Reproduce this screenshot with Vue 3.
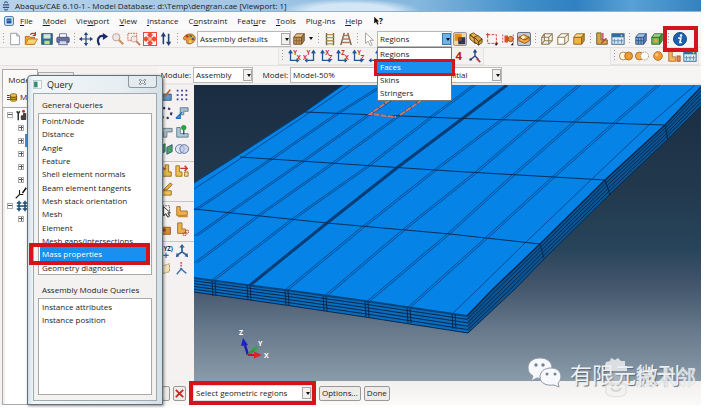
<script setup>
import { ref } from 'vue'

const menus = [
  ['', 'F', 'ile'], ['', 'M', 'odel'], ['Vie', 'w', 'port'], ['', 'V', 'iew'], ['', 'I', 'nstance'],
  ['C', 'o', 'nstraint'], ['Feat', 'u', 're'], ['', 'T', 'ools'], ['Plu', 'g', '-ins'], ['', 'H', 'elp']
]

const axis = (a, b, flip) => {
  const x = flip ? 12 : 4
  const e = flip ? 3 : 13
  const s = flip ? 1 : -1
  return `<path d="M${x} 3V13H${e}M${x - 2} 5L${x} 2L${x + 2} 5M${e + s * 2} 11L${e} 13L${e + s * 2} 15" fill="none" stroke="#1f5693" stroke-width="1.5"/>` +
    `<text x="${flip ? 4 : 7}" y="7" font-size="7" font-weight="bold" fill="#d32a2a" font-family="Open Sans">${a}</text>` +
    `<text x="${flip ? 0 : 11}" y="12" font-size="7" font-weight="bold" fill="#d32a2a" font-family="Open Sans">${b}</text>`
}
const digit = n => `<text x="4" y="13" font-size="13" font-weight="bold" fill="#cc1414" font-family="Open Sans">${n}</text>`
const box = (front, top, side, line) =>
  `<path d="M2 6H11V14H2Z" fill="${front}" stroke="${line}"/><path d="M2 6L5 2H14L11 6Z" fill="${top}" stroke="${line}"/><path d="M11 6L14 2V10L11 14Z" fill="${side}" stroke="${line}"/>`

const icons = {
  app: '<path d="M3 6H13M3 10H13" stroke="#38507e" stroke-width="2"/><path d="M5 3L8 1L11 3M5 13L8 15L11 13" fill="none" stroke="#5671a0" stroke-width="2"/>',
  win: '<rect x="1" y="1" width="14" height="14" rx="2" fill="#e8f0fa" stroke="#3c6fb5" stroke-width="1.6"/><rect x="4" y="4" width="8" height="8" fill="#2556a0"/><path d="M5 7H11" stroke="#9cc1ea"/>',
  file: '<path d="M3 1.5H10L13 4.5V14.5H3Z" fill="#fff" stroke="#8d93a0"/><path d="M10 1.5V4.5H13" fill="none" stroke="#8d93a0"/>',
  open: '<path d="M1.5 14V5H6L7 6H12V14Z" fill="#e8a333" stroke="#a8690f"/><path d="M1.5 14L5 8H15.5L12 14Z" fill="#fbd477" stroke="#b87a1e"/><path d="M7 3C9 1 11 1 13 3M13 0V4H10" fill="none" stroke="#c93220" stroke-width="1.3"/>',
  save: '<rect x="2" y="2" width="12" height="12" fill="#2f6e91" stroke="#20496b"/><rect x="4" y="2.5" width="8" height="5" fill="#d5e8d8"/><rect x="5" y="10" width="6" height="4" fill="#bfe07d"/>',
  print: '<path d="M4 6V2H12V6" fill="#fff" stroke="#656c8c"/><rect x="1" y="6" width="14" height="6" rx="1" fill="#67709b" stroke="#454d74"/><path d="M4 10H12L13 14.500H3Z" fill="#cfd8ee" stroke="#59628a"/>',
  move: '<path d="M8 1V15M1 8H15" stroke="#23457b" stroke-width="1.4"/><path d="M8 0L10.500 3.500H5.500ZM8 16L10.500 12.500H5.500ZM0 8L3.500 5.500V10.500ZM16 8L12.500 5.500V10.500Z" fill="#23457b"/>',
  rotate: '<path d="M5 15C1 8 5 3 11 5" fill="none" stroke="#182c6e" stroke-width="2.500"/><path d="M9 1L15 5L9 9Z" fill="#182c6e"/>',
  mag: '<circle cx="6" cy="6" r="4" fill="#efe7e4" stroke="#c4aaa4" stroke-width="1.300"/><path d="M9 9L14 14" stroke="#d1925c" stroke-width="2.500"/>',
  magbox: '<rect x="1" y="1.500" width="10" height="8" fill="none" stroke="#d84b3c" stroke-dasharray="2 1"/><circle cx="8" cy="8" r="3.500" fill="#f3e9e7" stroke="#bda29c"/><path d="M10.500 10.500L15 15" stroke="#c0785a" stroke-width="2"/>',
  fit: '<rect x="0" y="0" width="16" height="16" fill="#ef4a35"/><path d="M2 2L6 6M14 2L10 6M2 14L6 10M14 14L10 10M2 6V2H6M10 2H14V6M2 10V14H6M10 14H14V10" fill="none" stroke="#fff" stroke-width="1.600"/><rect x="6" y="6" width="4" height="4" fill="#f7b2a8"/>',
  cycle: '<path d="M5 14V3M11 2V13" stroke="#233f75" stroke-width="1.800"/><path d="M5 0L8 5H2ZM11 16L14 11H8Z" fill="#233f75"/>',
  palette: '<path d="M2 6C5 1 13 1 15 6C16 11 10 15 6 13C4 12 7 10 4 9C2 9 1 8 2 6Z" fill="#e99a3c" stroke="#9a5a1e"/><circle cx="6" cy="5" r="1.700" fill="#d1331e"/><circle cx="10" cy="4.500" r="1.500" fill="#2f8f3c"/><circle cx="12.500" cy="8" r="1.500" fill="#2c5fb5"/><circle cx="9.500" cy="11" r="1.500" fill="#f7e05b"/>',
  cube: box('#c9985a', '#e4c08a', '#a9783d', '#6d4b24') + '<path d="M5 6V14M2 10H11M8 6V14" stroke="#8a6230"/>',
  ladder: '<path d="M4 1V15M12 1V15" stroke="#6c6648" stroke-width="1.600"/><path d="M4 3H12M4 6.500H12M4 10H12M4 13.500H12" stroke="#b09a4d" stroke-width="1.500"/>',
  ladder2: '<path d="M6 1L2 15M10 1L14 15" stroke="#7b604a" stroke-width="1.600"/><path d="M5 4H11M4 8H12M3 12H13" stroke="#b57a52" stroke-width="1.500"/>',
  cursor: '<path d="M4 1V13L7 10.500L9.500 15.500L11.500 14.500L9 9.500H13Z" fill="#fff" stroke="#9b9b9b"/>',
  shade: '<rect x="0.500" y="0.500" width="15" height="15" rx="2" fill="#f4d6a6" stroke="#7b8295"/><rect x="2" y="2" width="8" height="8" fill="#e88c1d"/><rect x="6" y="6" width="8" height="8" fill="#273763"/><rect x="6" y="6" width="4" height="4" fill="#8d4f2a"/>',
  cubes: '<path d="M1 3L5 1L11 5L7 8ZM1 3V8L7 13V8ZM7 8L11 5V10L7 13Z" fill="#e9b34d" stroke="#5d4115"/><path d="M6 6L10 4L15 8L11 11ZM6 6V11L11 15V11ZM11 11L15 8V12L11 15Z" fill="#dca03b" stroke="#5d4115"/>',
  rect: '<rect x="3" y="3" width="10" height="10" fill="none" stroke="#d33429" stroke-dasharray="3 1.500"/><path d="M1 3H5M3 1V5M11 13H15M13 11V15" stroke="#d33429"/><path d="M14 15V12L11 15Z" fill="#111"/>',
  nodes: '<path d="M2 3V13M14 3V13" stroke="#b23b2c" stroke-dasharray="2 1.500"/><rect x="4" y="4" width="4" height="8" fill="#e4482f"/><circle cx="11" cy="8" r="3" fill="#e88f2e" stroke="#a83b1b"/><path d="M14 15V12L11 15Z" fill="#111"/>',
  tray: '<rect x="0.500" y="0.500" width="15" height="15" rx="2" fill="#c5c9d2" stroke="#4f5c7a"/><path d="M2 6L8 3L14 6L9 9ZM2 6V10L9 13L14 10V6L9 9Z" fill="#f1a845" stroke="#8a5616"/><circle cx="7" cy="6" r="2" fill="#fff2d8"/>',
  wire: '<path d="M2 6H10V14H2ZM5 2H14V10H5ZM2 6L5 2M10 6L14 2M10 14L14 10M2 14L5 10" fill="none" stroke="#8b7b52" stroke-width="1.200"/>',
  hidden: '<path d="M2 6H10V14H2ZM2 6L6 2H14L10 6M14 2V10L10 14" fill="#fdfcf6" stroke="#8f8158" stroke-width="1.200"/>',
  solid: box('#f1b53c', '#fbd784', '#c98a1d', '#8d611a'),
  align: '<path d="M2 1H7V9H14V14H2Z" fill="#d5a845" stroke="#5c5226"/><path d="M9 1V9M7 13L13 7" stroke="#c72a50" stroke-width="1.400"/>',
  table: '<rect x="1" y="2" width="14" height="12" fill="#dce9f2" stroke="#2e5f86"/><rect x="1" y="2" width="14" height="4" fill="#2f6f9c"/><path d="M4 8V13M8 8V13M12 8V13M2 10H14" stroke="#5d8aa8"/><circle cx="12" cy="4" r="1" fill="#f1cf51"/>',
  mesh: box('#7ea6da', '#a9c6ea', '#5b82b9', '#31517f') + '<path d="M5 6V14M8 6V14M2 10H11" stroke="#31517f"/>',
  green: box('#74b45c', '#a1d186', '#4f8e3c', '#2f6b27') + '<rect x="4.500" y="8" width="4" height="4" fill="#e9a236"/>',
  info: '<circle cx="8" cy="8" r="7.500" fill="#1a61b2" stroke="#124682"/><circle cx="9.200" cy="4" r="1.400" fill="#fff"/><path d="M6 7H9L7.800 12H10" fill="none" stroke="#fff" stroke-width="1.800"/>',
  csys: '<path d="M8 8V2M8 8L3 12M8 8L12 12" stroke="#23457b" stroke-width="1.600"/><path d="M8 0L10.500 4H5.500Z" fill="#23457b"/><circle cx="3" cy="12" r="1.500" fill="#23457b"/><path d="M10 11L14 15" stroke="#c7303f" stroke-width="2"/>',
  union: '<circle cx="5" cy="8" r="4.500" fill="#fff6e4" stroke="#a8803e"/><circle cx="11" cy="8" r="4.500" fill="#f29a2e" stroke="#a8661a"/>',
  cut: '<circle cx="5" cy="8" r="4.500" fill="#f4ab4a" stroke="#a8661a"/><circle cx="11" cy="8" r="4.500" fill="#fffdf7" stroke="#9a927b" stroke-dasharray="2 1"/>',
  ball: '<circle cx="8" cy="8" r="5" fill="#f09a30" stroke="#b46d1d"/><circle cx="6.500" cy="6.500" r="2" fill="#f9c377"/>',
  parts: '<path d="M2 1H6V9H10V14H2Z" fill="#f1b660" stroke="#b06f26"/><rect x="11.500" y="8" width="3.500" height="6" fill="#e98a4f" stroke="#a84f24"/>',
  instance: '<path d="M2 7H14V14H2Z" fill="#6494c5" stroke="#2f5481"/><path d="M6 10L13 2" stroke="#b5632b" stroke-width="2"/>',
  dots: '<g fill="#333c9c"><rect x="2" y="2" width="2" height="2"/><rect x="7" y="2" width="2" height="2"/><rect x="12" y="2" width="2" height="2"/><rect x="2" y="7" width="2" height="2"/><rect x="7" y="7" width="2" height="2"/><rect x="12" y="7" width="2" height="2"/><rect x="2" y="12" width="2" height="2"/><rect x="7" y="12" width="2" height="2"/><rect x="12" y="12" width="2" height="2"/></g>',
  ring: '<circle cx="8" cy="8" r="6" fill="none" stroke="#30335f" stroke-width="2.500" stroke-dasharray="2.500 3.500"/>',
  step: '<path d="M6 2H15V6H10V10H6Z" fill="#a9c1cc" stroke="#55788a"/><path d="M1 14L8 7M1 14H6V10" fill="#79a5df" stroke="#1f6fc4" stroke-width="1.500"/>',
  stepg: '<path d="M1 5H15V9H9V15H5V9H1Z" fill="#b3c2ca" stroke="#5e7786"/>',
  pin: '<path d="M2 4H6V11H15V15H2Z" fill="#b4cad3" stroke="#55788a"/><path d="M10 5V12" stroke="#1d4e86" stroke-width="1.500"/><circle cx="10" cy="4" r="3" fill="#2f9e45"/>',
  sheet: '<path d="M1 5L7 2V11L1 14Z" fill="#4ba35a" stroke="#2c6f39"/><path d="M9 6L15 3V11L9 14Z" fill="#4ba35a" stroke="#30568b"/>',
  rings: '<circle cx="5.500" cy="8" r="5" fill="#dfe6f4" stroke="#5b6c9b"/><circle cx="10.500" cy="8" r="5" fill="#b8c6e4" fill-opacity=".6" stroke="#5b6c9b"/>',
  bracket: '<path d="M3 6H7V1H11V9H14V14H3Z" fill="#e9b54a" stroke="#8f6520"/><path d="M2 3L8 6" stroke="#c44427" stroke-width="1.500"/>',
  shift: '<path d="M1 2H5V9H8V14H1Z" fill="#f1c04e" stroke="#96701f"/><path d="M11 9H15V14H11Z" fill="#f6dc96" stroke="#96701f"/><path d="M6 5H14M11 2L14 5L11 8" fill="none" stroke="#cf2f24" stroke-width="1.500"/>',
  tilt: '<path d="M2 10H14V15H2Z" fill="#f1c04e" stroke="#96701f"/><path d="M5 9L13 1L15 3L9 9Z" fill="#f0b33b" stroke="#7b551a"/>',
  pick: '<rect x="1" y="2" width="11" height="11" fill="none" stroke="#555" stroke-dasharray="2 1"/><path d="M5 3V13L8 11L10 15L12 14L10 10H13Z" fill="#fff" stroke="#222"/>',
  slab: '<path d="M2 3H6V8H14V13H2Z" fill="#eeb04a" stroke="#a16b24"/><path d="M2 13L4 15H15L14 13" fill="#c98b34"/>',
  slabcut: '<path d="M3 1H8V8H12V13H3Z" fill="#e8b14b" stroke="#a16b24"/><circle cx="11" cy="14" r="1.800" fill="none" stroke="#c0473a"/><circle cx="14" cy="11" r="1.800" fill="none" stroke="#c0473a"/>',
  block: '<path d="M1 6H13V14H1Z" fill="#d98c38" stroke="#8b551b"/><circle cx="6" cy="9" r="2" fill="#8d4f23"/>',
  xyz: '<text x="5" y="8" font-size="7" font-weight="bold" fill="#23355f" font-family="Open Sans">YZ)</text><path d="M8 10V16M5 13H11" stroke="#2c62a8" stroke-width="1.300"/>',
  triad: '<path d="M8 9V2M8 9L2 13M8 9L14 13" stroke="#2b5f97" stroke-width="2"/><path d="M8 0L11 4H5ZM1 15L2 10L5 14ZM15 15L14 10L11 14Z" fill="#2b5f97"/>',
  plane: '<path d="M2 5L12 2V11L2 14Z" fill="#efe1bd" stroke="#a38f58" stroke-dasharray="3 1"/>',
  triad2: '<path d="M7 0V5" stroke="#c7303f" stroke-width="1.500" stroke-dasharray="2 1"/><path d="M7 8L2 14M7 8L13 13" stroke="#3d73b2" stroke-width="1.500"/><circle cx="7" cy="8" r="1.500" fill="#3d73b2"/>',
  db: '<path d="M5 4C5 2 14 2 14 4V12C14 14 5 14 5 12Z" fill="#eec23f" stroke="#5b430d"/><path d="M5 6C5 8 14 8 14 6M5 9C5 11 14 11 14 9M0 5H4M0 8H4M0 11H4" fill="none" stroke="#5b430d" stroke-width="1.500"/>',
  model: '<path d="M3 15V6L1 3M3 6L5 3" fill="none" stroke="#333" stroke-width="2"/><path d="M7 14V9H10V6H13V14Z" fill="#444" stroke="#222"/><circle cx="10" cy="3" r="2" fill="#bb3526"/>',
  annot: '<path d="M1 15L7 9M6 4V10H11" fill="none" stroke="#222" stroke-width="1.500"/><path d="M10 8L15 1" stroke="#111" stroke-width="2"/>',
  jobs: '<path d="M4 1V15M12 1V15M1 4H7M9 4H15M1 8H15M1 12H7M9 12H15" stroke="#1f4a68" stroke-width="2"/>',
  query: '<rect x="1" y="1" width="14" height="14" fill="#f3f7f6" stroke="#9bb0b5"/><rect x="2" y="3" width="6" height="10" fill="#2a8c73"/>'
}

const mainA = ['file', 'open', 'save', 'print', '|', 'move', 'rotate', 'mag', 'magbox', 'fit', 'cycle', '|', 'palette']
const mainC = ['shade', 'cubes', 'rect', 'nodes', 'tray', '|', 'wire', 'hidden', 'solid', '|', 'align', 'table', '|', 'mesh', 'green', '|']
const views = [axis('Y', 'X'), axis('Y', 'X', true), axis('X', 'Z'), axis('Z', 'X'), axis('Y', 'Z'), axis('', '', true)]
const saved = ['', '', '', digit(4), icons.csys]
const booleans = ['union', 'cut', 'ball', 'parts', 'table']
const toolbox = [
  ['instance', 'dots', 'ring', 'step', 'stepg', 'pin', 'sheet', 'rings'],
  ['bracket', 'shift', 'tilt'],
  ['pick', 'slab', 'block', 'slabcut'],
  ['xyz', 'triad', 'plane', 'triad2']
]
const picks = ['Regions', 'Faces', 'Skins', 'Stringers']
const general = ['Point/Node', 'Distance', 'Angle', 'Feature', 'Shell element normals', 'Beam element tangents',
  'Mesh stack orientation', 'Mesh', 'Element', 'Mesh gaps/intersections', 'Mass properties', 'Geometry diagnostics']
const assembly = ['Instance attributes', 'Instance position']
const chosen = ref('Mass properties')
const pick = ref('Faces')

const tree = [
  { d: 0, i: 'model' }, { d: 1 }, { d: 1, sel: true }, { d: 1 }, { d: 1 }, { d: 1 },
  { d: 1, i: 'annot', leaf: true }, { d: 0, i: 'jobs' }, { d: 1 }
]

// Plate geometry: each rib runs from the far edge to the front edge of the top face.
const ribs = [
  [[377, 88], [337, 113], [270, 159], [194, 210]],
  [[412, 85], [367, 115], [302, 161], [227, 213], [194, 236]],
  [[442, 85], [397, 116], [332, 163], [258, 215], [194, 263]],
  [[473, 85], [430, 117], [367, 166], [293, 218], [212, 280]],
  [[543, 85], [500, 120], [435, 169], [363, 226], [285, 290]],
  [[578, 85], [535, 121], [475, 172], [402, 230], [323, 297]],
  [[617, 85], [573, 122], [512, 175], [447, 234], [365, 303]],
  [[657, 85], [613, 123], [552, 177], [485, 238], [407, 308]]
]
const pts = (list, dx = 0) => list.map(([x, y]) => `${x + dx},${y}`).join(' ')
const topEdge = [[194, 278], [285, 290], [365, 301], [467, 316]]
const lowEdge = [[194, 292], [285, 305], [365, 317], [468, 333]]
const sideTop = [[467, 316], [492, 290], [540, 244], [605, 180], [665, 125], [701, 87]]
const sideLow = [[468, 333], [515, 289], [545, 258], [610, 194], [668, 139], [701, 106]]
const mix = (a, b, t) => a.map(([x, y], i) => [x + (b[i][0] - x) * t, y + (b[i][1] - y) * t])
const layers = [0.2, 0.4, 0.6, 0.8]
const joints = [[212, 281], [247, 285], [285, 290], [323, 296], [365, 302], [407, 308], [452, 314]]
</script>

<template>
  <div class="app">
    <header class="title">
      <svg class="glyph" viewBox="0 0 16 16" v-html="icons.app" />
      <span>Abaqus/CAE 6.10-1 - Model Database: d:\Temp\dengran.cae [Viewport: 1]</span>
    </header>

    <nav class="menu">
      <svg class="glyph" viewBox="0 0 16 16" v-html="icons.win" />
      <button v-for="m in menus" :key="m.join('')" type="button">{{ m[0] }}<u>{{ m[1] }}</u>{{ m[2] }}</button>
      <svg class="help" viewBox="0 0 18 16">
        <path d="M2 1V12L5 9.500L7 14L9 13L7 9H10Z" fill="#111" />
        <text x="10" y="13" font-size="13" font-weight="bold" font-family="Open Sans">?</text>
      </svg>
    </nav>

    <div class="bar">
      <i class="grip" />
      <template v-for="(n, k) in mainA" :key="k">
        <i v-if="n === '|'" class="grip" />
        <button v-else class="tool" type="button" :aria-label="n"><svg viewBox="0 0 16 16" v-html="icons[n]" /></button>
      </template>
      <label class="combo colors"><select aria-label="Color coding"><option>Assembly defaults</option></select></label>
      <button class="tool" type="button" aria-label="cube"><svg viewBox="0 0 16 16" v-html="icons.cube" /></button>
      <button class="more" type="button" aria-label="more" />
      <i class="grip" />
      <button class="tool" type="button" aria-label="ladder"><svg viewBox="0 0 16 16" v-html="icons.ladder" /></button>
      <button class="tool" type="button" aria-label="stringer"><svg viewBox="0 0 16 16" v-html="icons.ladder2" /></button>
      <i class="grip" />
      <button class="tool" type="button" aria-label="select"><svg viewBox="0 0 16 16" v-html="icons.cursor" /></button>
      <div class="filter">
        <label class="combo open"><select aria-label="Selection filter"><option>Regions</option></select></label>
        <ul class="drop">
          <li v-for="p in picks" :key="p" :class="{ on: p === pick }" @click="pick = p">{{ p }}</li>
        </ul>
      </div>
      <template v-for="(n, k) in mainC" :key="'c' + k">
        <i v-if="n === '|'" class="grip" />
        <button v-else class="tool" type="button" :aria-label="n"><svg viewBox="0 0 16 16" v-html="icons[n]" /></button>
      </template>
      <button class="tool info" type="button" aria-label="Query information"><svg viewBox="0 0 16 16" v-html="icons.info" /></button>
    </div>

    <div class="bar second">
      <div class="group">
        <i class="grip" />
        <button v-for="(v, k) in views" :key="k" class="tool" type="button" :aria-label="'view ' + k"><svg viewBox="0 0 16 16" v-html="v" /></button>
        <i class="grip" /><i class="grip" /><i class="grip" />
        <button v-for="(v, k) in saved" :key="'s' + k" class="tool" type="button" :aria-label="'saved view ' + k"><svg viewBox="0 0 16 16" v-html="v" /></button>
      </div>
      <div class="group">
        <i class="grip" />
        <button v-for="n in booleans" :key="n" class="tool" type="button" :aria-label="n"><svg viewBox="0 0 16 16" v-html="icons[n]" /></button>
      </div>
    </div>

    <main class="main">
      <aside class="left">
        <div class="tabs"><button type="button" class="active">Model</button><button type="button" aria-label="Results" /></div>
        <div class="dbrow"><svg viewBox="0 0 16 16" v-html="icons.db" /><span>M</span></div>
        <ul class="tree">
          <li v-for="(t, k) in tree" :key="k" :class="{ child: t.d, sel: t.sel }">
            <i class="exp" :class="{ leaf: t.leaf, minus: !t.d }" />
            <svg v-if="t.i" viewBox="0 0 16 16" v-html="icons[t.i]" />
          </li>
        </ul>

        <section class="query">
          <div class="qtitle">
            <svg viewBox="0 0 16 16" v-html="icons.query" /><span>Query</span>
            <button type="button" aria-label="Close">
              <svg viewBox="0 0 12 8"><path d="M2 1H4L6 3L8 1H10V2L8 4L10 6V7H8L6 5L4 7H2V6L4 4L2 2Z" fill="#fff" stroke="#5a6470" /></svg>
            </button>
          </div>
          <div class="qbody">
            <h2>General Queries</h2>
            <ul class="qlist general">
              <li v-for="g in general" :key="g" :class="{ on: g === chosen }" @click="chosen = g"><span>{{ g }}</span></li>
            </ul>
            <h2 class="next">Assembly Module Queries</h2>
            <ul class="qlist fill">
              <li v-for="g in assembly" :key="g"><span>{{ g }}</span></li>
            </ul>
          </div>
        </section>
      </aside>

      <div class="right">
        <div class="context">
          <label for="module">Module:</label>
          <span class="combo c1"><select id="module"><option>Assembly</option></select></span>
          <label for="model">Model:</label>
          <span class="combo c2"><select id="model"><option>Model-50%</option></select></span>
          <span class="combo c3"><select aria-label="Step"><option>Initial</option></select></span>
        </div>

        <div class="work">
          <div class="toolbox">
            <div v-for="(g, k) in toolbox" :key="k" class="tgroup">
              <button v-for="n in g" :key="n" class="tool" type="button" :aria-label="n"><svg viewBox="0 0 16 16" v-html="icons[n]" /></button>
            </div>
          </div>

          <div class="viewport">
            <svg class="scene" viewBox="194 85 507 296" preserveAspectRatio="xMinYMin slice">
              <polygon :points="pts([[194, 183], [240, 154], [305, 112], [343, 85], [701, 85], [701, 87], [665, 125], [605, 180], [540, 244], [467, 316], [194, 278]])" fill="#0583e6" />
              <polygon :points="pts([...topEdge, ...[...lowEdge].reverse()])" fill="#0a6cbd" />
              <polygon :points="pts([...sideTop, ...[...sideLow].reverse()])" fill="#0b5595" />
              <g fill="none" stroke="#06284d">
                <template v-for="t in layers" :key="t">
                  <polyline :points="pts(mix(topEdge, lowEdge, t))" />
                  <polyline :points="pts(mix(sideTop, sideLow, t))" />
                </template>
                <polyline :points="pts(topEdge)" stroke="#07447c" stroke-width="2" />
                <polyline :points="pts(sideTop)" stroke-width="1.500" />
                <polyline :points="pts(lowEdge)" />
                <polyline :points="pts(sideLow)" />
                <path v-for="j in joints" :key="j[0]" :d="`M${j[0]} ${j[1]}l1 15m2 -15l1 15`" />
                <path d="M540 244L544 258M605 180L610 195M665 125L668 140" />
              </g>
              <g fill="none" stroke="#043f7e" stroke-width=".8">
                <template v-for="(r, k) in ribs" :key="k">
                  <polyline :points="pts(r)" /><polyline :points="pts(r, 3)" />
                </template>
                <polyline points="350,85 303,117 240,159 194,189" />
                <polyline points="695,85 650,124 592,179 525,243 478,289 452,314" />
                <path d="M194 183L240 154L305 112L343 85" />
              </g>
              <polyline points="507,85 450,128 398,167 327,223 249,286" fill="none" stroke="#063d77" stroke-width="3" />
              <g fill="none" stroke="#052f5f">
                <polyline points="305,112 450,118 665,125" />
                <polyline points="240,157 330,163 450,171 605,180" />
                <polyline points="194,209 327,223 450,234 540,244" />
              </g>
              <path d="M390 100L370 114L396 117M400 115L422 100" fill="none" stroke="#cf776f" stroke-width="2" stroke-dasharray="6 1" />

              <path d="M248 355L244 342" stroke="#1c1fa8" stroke-width="2.500" />
              <path d="M243 338L248 345L241 346Z" fill="#1c1fd0" />
              <path d="M248 355L256 348" stroke="#2f9440" stroke-width="2.500" />
              <path d="M258 346L256 352L252 348Z" fill="#32a545" />
              <path d="M248 355H256" stroke="#b5182a" stroke-width="2" />
              <path d="M262 355L254 351.500V358.500Z" fill="#e3202c" />
              <g fill="#fff" font-family="Open Sans" font-size="7" font-weight="bold">
                <text x="239" y="335">Z</text><text x="258" y="346">Y</text><text x="264" y="358">X</text>
              </g>
            </svg>
          </div>
        </div>

        <div class="prompt">
          <button class="pbtn back" type="button" aria-label="Previous" />
          <button class="pbtn cancel" type="button" aria-label="Cancel">
            <svg viewBox="0 0 12 12"><path d="M2 2L10 10M10 2L2 10" stroke="#d22222" stroke-width="2" /></svg>
          </button>
          <div class="mark">
            <label class="combo geo"><select aria-label="Selection mode"><option>Select geometric regions</option></select></label>
          </div>
          <button class="pbtn" type="button">Options...</button>
          <button class="pbtn" type="button">Done</button>
        </div>
      </div>
    </main>

    <div class="brand">
      <svg class="bubbles" viewBox="0 0 36 32">
        <path d="M13 1C6 1 1 5 1 11C1 15 3 17 6 19L4 24L10 21C20 23 25 18 25 11C25 5 20 1 13 1Z" fill="#f6f8fc" stroke="#8e99a6" />
        <path d="M24 11C17 11 13 15 13 20C13 26 19 29 27 28L32 30L31 26C36 22 35 11 24 11Z" fill="#f6f8fc" stroke="#8e99a6" />
        <g fill="#76838f"><circle cx="9" cy="8" r="1.700" /><circle cx="16" cy="8" r="1.700" /><circle cx="20" cy="17" r="1.500" /><circle cx="28" cy="17" r="1.500" /></g>
      </svg>
      <span class="cn">有限元微刊</span>
      <div class="stamp">
        <svg viewBox="0 0 26 42">
          <path d="M3 5L7 4L8 1L12 3L15 1L18 4L22 4V9H24V14H2V8Z" fill="#f2f3f4" />
          <path d="M4 16H22V27H4Z" fill="#e8ebee" fill-opacity=".4" />
          <path d="M3 27H23V36C22 41 4 41 3 36Z" fill="#f0f0ef" fill-opacity=".6" stroke="#d7d7d7" />
          <path d="M8 31C10 35 16 35 18 31" fill="none" stroke="#cfcfcf" stroke-width="2" />
        </svg>
        <span>技术邻</span>
      </div>
    </div>
  </div>
</template>

<style>
body { background: #fff; }
</style>

<style scoped>
* { box-sizing: border-box; }
.app {
  position: relative;
  display: flex;
  flex-direction: column;
  min-height: 100vh;
  padding: 0 4px 3px 0;
  overflow: hidden;
  font: 8px/12px "Open Sans", "Noto Sans", sans-serif;
  color: #1c1c1c;
}
button { padding: 0; border: 0; background: none; font: inherit; color: inherit; }
ul { margin: 0; padding: 0; list-style: none; }
svg { display: block; }
.glyph { width: 10px; height: 10px; flex: none; }

.title {
  display: flex; align-items: center; gap: 4px; height: 12px; padding-left: 1px; white-space: nowrap;
  background:
    radial-gradient(ellipse 70px 12px at 50% 100%, #d3e6f6 60%, transparent),
    linear-gradient(90deg, #b7d2ea 0, #9fc5e4 38%, #84b7dd 60%, #3f8ec9 75%, #2f81c1 82%, #58a1d6 90%, #3382c0);
  border-bottom: 1px solid #8fb1cc;
}
.menu { display: flex; align-items: center; gap: 10px; height: 18px; padding-left: 4px; background: #fafafa; white-space: nowrap; }
.menu .glyph { margin-right: -4px; }
.help { width: 11px; height: 10px; }

.bar { display: flex; align-items: center; height: 18px; background: #f7f5f3; border-bottom: 1px solid #e3e0de; }
.bar > *, .group > * { flex: none; }
.grip { width: 7px; height: 12px; background: repeating-linear-gradient(#9b9b9b 0 1px, transparent 1px 3px) 3px 0 / 1px 12px no-repeat; }
.tool { display: flex; align-items: center; justify-content: center; width: 16px; height: 16px; }
.tool svg { width: 14px; height: 14px; }
.more { display: flex; align-items: center; justify-content: center; width: 8px; height: 16px; }
.more::before { content: ""; border: 2px solid transparent; border-top: 3px solid #111; border-bottom: 0; }
.second { justify-content: flex-end; gap: 126px; padding-right: 2px; }
.group { display: flex; align-items: center; height: 17px; background: #f4f2f0; border: 1px solid #e6e4e2; border-top: 0; }

.combo { position: relative; display: block; height: 16px; background: #fff; border: 1px solid #b9b9b9; }
.combo select {
  display: block; width: 100%; height: 100%; margin: 0; padding: 0 0 0 2px; border: 0; border-radius: 0; outline: 0;
  appearance: none; background: transparent; font: inherit; color: inherit;
}
.combo::before { content: ""; position: absolute; top: 1px; right: 0; bottom: 1px; width: 7px; background: #f2f0ee; border: 1px solid #a9a7a5; }
.combo::after { content: ""; position: absolute; top: 6px; right: 1px; border: 2px solid transparent; border-top: 3px solid #111; border-bottom: 0; }
.colors { width: 94px; }
.open { width: 75px; }
.open::before { background: #6fb4e6; border-color: #3a78b0; }
.filter { position: relative; }
.drop { position: absolute; z-index: 4; top: 16px; left: 0; right: 0; background: #fff; border: 1px solid #777; }
.drop li { height: 13px; padding-left: 2px; line-height: 12px; }
.drop .on { position: relative; background: #1990f0; color: #fff; }
.drop .on::after { content: ""; position: absolute; inset: -2px -4px; border: 3px solid #d4141c; }
.info { position: relative; }
.info::after { content: ""; position: absolute; inset: -5px -10px -5px -9px; border: 4px solid #d4141c; z-index: 3; }

.main { position: relative; display: flex; flex: 1; background: #f4f1f0; }
.left { position: relative; width: 158px; flex: none; display: flex; flex-direction: column; padding: 3px 0 0 2px; }
.tabs { display: flex; align-items: flex-end; height: 20px; }
.tabs button { width: 36px; height: 17px; border: 1px solid #aaa; border-bottom: 0; background: #f4f2f1; }
.tabs .active { height: 20px; background: #faf9f8; }
.dbrow { display: flex; align-items: center; gap: 2px; height: 18px; padding: 0 0 2px 4px; background: #faf9f8; border-left: 1px solid #bbb; }
.dbrow svg { width: 11px; height: 11px; }
.tree { flex: 1; background: #fff; border: 1px solid #aaa; border-width: 1px 0 1px 1px; box-shadow: inset 2px 0 #f1efee; }
.tree li { display: flex; align-items: center; gap: 3px; height: 13px; padding-left: 4px; }
.tree .child { padding-left: 15px; }
.tree .sel { background: linear-gradient(#3b8fd8, #3b8fd8) 22px 0 no-repeat; }
.tree svg { width: 12px; height: 12px; }
.exp { width: 6px; height: 6px; border: 1px solid #aaa; background: linear-gradient(#555, #555) center / 4px 1px no-repeat, linear-gradient(#555, #555) center / 1px 4px no-repeat; }
.exp.minus { background: linear-gradient(#555, #555) center / 4px 1px no-repeat; }
.exp.leaf { width: 0; height: 0; border: 0; margin-left: -6px; }

.query {
  position: absolute; z-index: 2; top: 9px; left: 27px; right: -5px; bottom: 0; display: flex; flex-direction: column;
  padding: 0 5px 3px; border: 1px solid #61717c; border-radius: 4px 4px 0 0;
  background: linear-gradient(90deg, #cfdde6, #f1f6f8 5px, #e6eef2 70%, #d5e0e6);
  box-shadow: 1px 1px 3px #0007;
}
.qtitle { display: flex; align-items: center; gap: 5px; height: 17px; font-size: 9px; }
.qtitle > svg { width: 9px; height: 9px; }
.qtitle span { padding-top: 1px; }
.qtitle button { align-self: flex-start; display: flex; justify-content: center; align-items: center; width: 29px; height: 12px; margin-left: auto; border: 1px solid #8b98a1; border-top: 0; border-radius: 0 0 3px 3px; background: #e3ebef; }
.qtitle button svg { width: 9px; height: 6px; }
.qbody { flex: 1; display: flex; flex-direction: column; padding: 5px 4px; background: #f4f2f1; border: 1px solid #9faab1; }
h2 { margin: 0 0 2px 4px; font: inherit; line-height: 12px; }
.next { margin-top: 9px; }
.qlist { background: #fff; border: 1px solid #a9a9a9; }
.qlist li { display: flex; align-items: center; padding-left: 3px; height: 13px; line-height: 13px; white-space: nowrap; }
.general { display: grid; grid-auto-rows: 1fr; height: 162px; }
.general li { height: auto; }
.fill { flex: 1; padding-top: 1px; }
.qlist .on { position: relative; color: #fff; background: linear-gradient(#1990f0, #1990f0) 1px 0 / 106px 100% no-repeat; }
.qlist .on::after { content: ""; position: absolute; inset: -4px 1px -4px -10px; border: 4px solid #d4141c; }

.right { flex: 1; min-width: 0; display: flex; flex-direction: column; }
.context { display: flex; align-items: center; height: 19px; padding-left: 1px; background: #f7f5f4; border-bottom: 2px solid #ebe8e6; }
.context label { flex: none; padding-right: 2px; text-align: right; width: 34px; }
.context .combo + label { width: 37px; }
.c1 { width: 60px; }
.c2 { width: 130px; }
.c3 { width: 58px; margin-left: 24px; }
.work { flex: 1; display: flex; }
.toolbox { width: 36px; flex: none; padding-top: 1px; }
.tgroup { display: grid; grid-template-columns: 16px 16px; grid-auto-rows: 18px; padding: 1px 0 2px; border-bottom: 1px solid #c9c5c2; }
.tgroup:last-child { border: 0; }
.viewport { position: relative; flex: 1; min-width: 0; overflow: hidden; background: linear-gradient(#1a2c42, #22394d 35%, #28445a 55%, #43566c 68%, #65778a 82%, #8a9ba9); }
.scene { position: absolute; inset: 0; width: 100%; height: 100%; }

.prompt { display: flex; align-items: center; gap: 3px; height: 24px; padding-left: 4px; background: linear-gradient(#f2f0ee, #fbfaf9); white-space: nowrap; }
.pbtn { height: 15px; padding: 0 2px; border: 1px solid #999; border-radius: 2px; background: #eeebe9; }
.back { width: 8px; }
.cancel { width: 13px; padding: 0; }
.cancel svg { width: 11px; height: 11px; }
.mark { width: 127px; padding: 0; border: 4px solid #d4141c; }
.geo { border-color: #ddd; }

.brand { position: absolute; right: 9px; bottom: 19px; display: flex; align-items: center; gap: 7px; padding-right: 16px; }
.bubbles { width: 36px; height: 32px; }
.cn { font: 22px/32px "Noto Sans CJK SC", sans-serif; color: #eef1f5; text-shadow: 1px 1px 1px #5d6873; }
.stamp { position: absolute; right: 0; top: 0; display: flex; gap: 7px; opacity: .8; }
.stamp svg { width: 26px; height: 42px; }
.stamp span { font: bold 20px/40px "Noto Sans CJK SC", sans-serif; color: #eef0f2; text-shadow: 0 0 1px #9aa4ad; }
</style>
